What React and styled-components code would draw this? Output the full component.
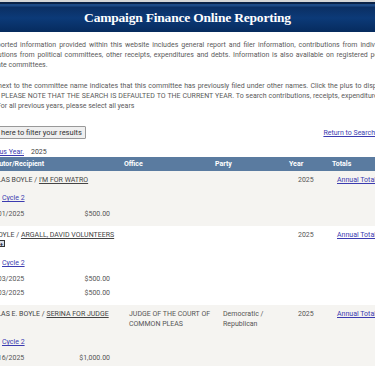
import React from 'react';
import styled, { createGlobalStyle } from 'styled-components';

const GlobalStyle = createGlobalStyle`
  html, body {
    margin: 0;
    padding: 0;
    background: #fff;
    overflow: hidden;
  }
  body {
    font-family: Roboto, "Liberation Sans", Arial, sans-serif;
    color: #555;
  }
`;

const records = [
  {
    donor: 'NICHOLAS BOYLE',
    recipient: "I'M FOR WATRO",
    office: '',
    party: '',
    year: '2025',
    plus: false,
    items: [{ date: '10/01/2025', amount: '$500.00' }],
  },
  {
    donor: 'NICK BOYLE',
    recipient: 'ARGALL, DAVID VOLUNTEERS',
    office: '',
    party: '',
    year: '2025',
    plus: true,
    items: [
      { date: '10/03/2025', amount: '$500.00' },
      { date: '10/03/2025', amount: '$500.00' },
    ],
  },
  {
    donor: 'NICHOLAS E. BOYLE',
    recipient: 'SERINA FOR JUDGE',
    office: 'JUDGE OF THE COURT OF COMMON PLEAS',
    party: 'Democratic / Republican',
    year: '2025',
    plus: false,
    items: [{ date: '10/16/2025', amount: '$1,000.00' }],
  },
];

export default function App() {
  return (
    <>
      <GlobalStyle />
      <TopStrip />
      <Banner>
        <BannerTitle>Campaign Finance Online Reporting</BannerTitle>
      </Banner>
      <Page>
        <Intro>
          The reported information provided within this website includes general report and filer information, contributions from individuals,
          contributions from political committees, other receipts, expenditures and debts. Information is also available on registered political
          candidate committees.
        </Intro>
        <Intro>
          A plus next to the committee name indicates that this committee has previously filed under other names. Click the plus to display all
          names. PLEASE NOTE THAT THE SEARCH IS DEFAULTED TO THE CURRENT YEAR. To search contributions, receipts, expenditures and
          debts. For all previous years, please select all years
        </Intro>
        <Toolbar>
          <FilterButton type="button">Click here to filter your results</FilterButton>
          <Link href="#">Return to Search</Link>
        </Toolbar>
        <YearNav>
          <Link href="#">Previous Year.</Link>
          <span>2025</span>
        </YearNav>
        <Table>
          <HeadRow>
            <HeadCell>Contributor/Recipient</HeadCell>
            <HeadCell>Office</HeadCell>
            <HeadCell>Party</HeadCell>
            <HeadCell>Year</HeadCell>
            <HeadCell>Totals</HeadCell>
          </HeadRow>
          {records.map((r, i) => (
            <Record key={i} $alt={i % 2 === 0}>
              <MainRow>
                <NameCell>
                  {r.donor} / <Recipient>{r.recipient}</Recipient>
                  {r.plus && <PlusBox>+</PlusBox>}
                </NameCell>
                <OfficeCell>{r.office}</OfficeCell>
                <PartyCell>{r.party}</PartyCell>
                <YearCell>{r.year}</YearCell>
                <TotalCell>
                  <Link href="#">Annual Total</Link>
                </TotalCell>
              </MainRow>
              <Details>
                <CycleLink href="#">Cycle 2</CycleLink>
                {r.items.map((it, j) => (
                  <ItemRow key={j}>
                    <span>{it.date}</span>
                    <Amount>{it.amount}</Amount>
                  </ItemRow>
                ))}
              </Details>
            </Record>
          ))}
        </Table>
      </Page>
    </>
  );
}

const TopStrip = styled.div`
  height: 2px;
  background: #d6d6d6;
`;

const Banner = styled.header`
  height: 30px;
  display: flex;
  align-items: center;
  justify-content: center;
  border-top: 2px solid #0b2347;
  box-sizing: border-box;
  background: linear-gradient(#1d4a85 0px, #1d4a85 2px, #0b2f63 3px, #0c3a78 50%, #062b5e 100%);
`;

const BannerTitle = styled.h1`
  margin: 0;
  font-family: "Liberation Serif", "Times New Roman", serif;
  font-size: 13.5px;
  letter-spacing: -0.2px;
  font-weight: bold;
  color: #fff;
`;

const Page = styled.main`
  margin-left: -27px;
  width: 430px;
  padding-top: 8px;
  font-size: 7px;
  line-height: 10px;
`;

const Intro = styled.p`
  margin: 0 0 11px;
  padding: 0 8px 0 3px;
  text-align: justify;
  color: #5a5a5a;
`;

const Toolbar = styled.div`
  display: flex;
  align-items: center;
  justify-content: space-between;
  width: 402px;
  margin-top: 15px;
  padding-left: 6px;
  box-sizing: border-box;
`;

const FilterButton = styled.button`
  font-family: inherit;
  font-size: 7.5px;
  color: #333;
  background: #efefef;
  border: 1px solid #999;
  border-radius: 1px;
  height: 13px;
  padding: 0 3px;
`;

const Link = styled.a`
  color: #3b3bb0;
  text-decoration: underline;
`;

const YearNav = styled.div`
  display: flex;
  gap: 7px;
  margin-top: 8px;
  padding-left: 7px;
  color: #444;
`;

const Table = styled.div`
  margin-top: 0;
`;

const grid = `
  display: grid;
  grid-template-columns: 149px 91px 74px 43px 71px;
`;

const HeadRow = styled.div`
  ${grid}
  height: 14px;
  align-items: center;
  background: #5a7ba0;
  color: #fff;
  font-weight: bold;
`;

const HeadCell = styled.div`
  padding-left: 2px;
  &:first-child {
    padding-left: 3px;
  }
`;

const Record = styled.div`
  background: ${(p) => (p.$alt ? '#f5f4f1' : '#fff')};
  padding: 4px 0 5px;
`;

const MainRow = styled.div`
  ${grid}
  align-items: start;
`;

const NameCell = styled.div`
  padding-left: 3px;
  color: #444;
`;

const Recipient = styled.span`
  text-decoration: underline;
`;

const PlusBox = styled.span`
  display: block;
  width: 5px;
  height: 5px;
  margin: 0 0 3px 22px;
  border: 1px solid #333;
  background: #d8dde6;
  font-size: 6px;
  line-height: 5px;
  text-align: center;
  color: #223;
  font-weight: bold;
`;

const OfficeCell = styled.div`
  padding-left: 7px;
`;

const PartyCell = styled.div`
  padding-left: 10px;
`;

const YearCell = styled.div`
  padding-left: 11px;
`;

const TotalCell = styled.div`
  padding-left: 7px;
`;

const Details = styled.div`
  padding: 8px 0 0 29px;
`;

const CycleLink = styled(Link)`
  display: inline-block;
  margin-bottom: 4px;
`;

const ItemRow = styled.div`
  display: grid;
  grid-template-columns: 60px 63px;
  height: 14px;
  align-items: center;
  margin-left: -15px;
`;

const Amount = styled.span`
  text-align: right;
`;
